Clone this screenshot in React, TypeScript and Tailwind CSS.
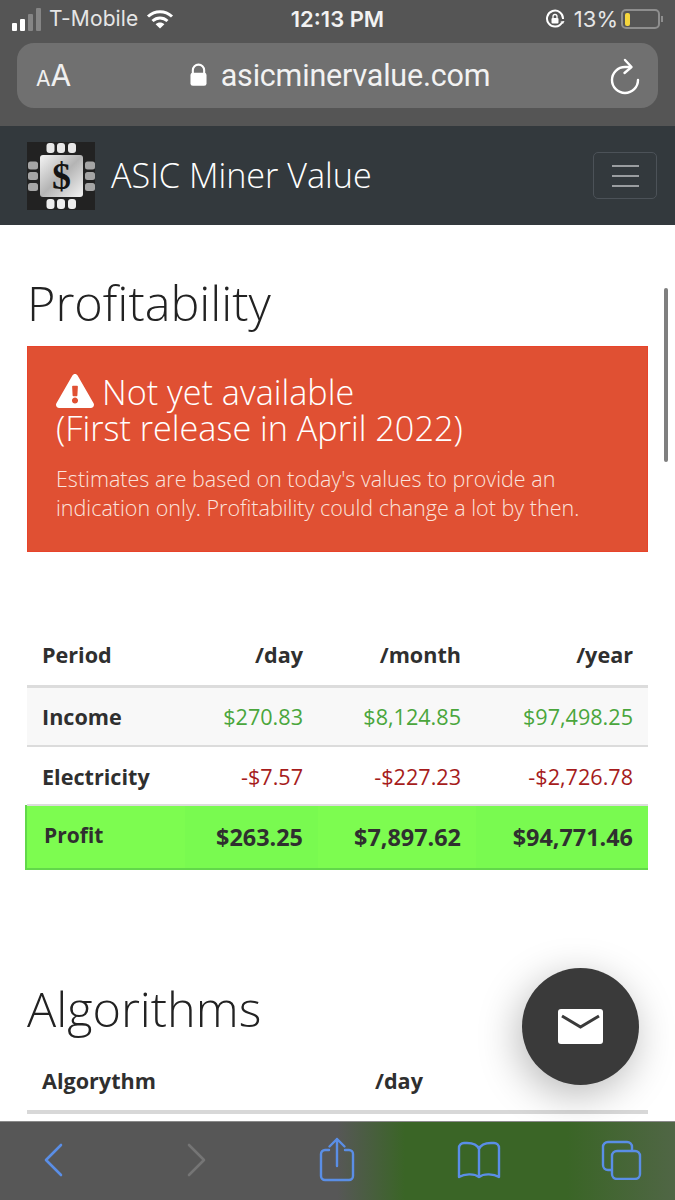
import { FaExclamationTriangle } from 'react-icons/fa';

const rows = [
  { label: 'Income', day: '$270.83', month: '$8,124.85', year: '$97,498.25', color: 'text-[#4aa63c]', bg: 'bg-[#f8f8f8]', height: 'h-[60px]', cell: 'pt-[1px]' },
  { label: 'Electricity', day: '-$7.57', month: '-$227.23', year: '-$2,726.78', color: 'text-[#a61c1c]', bg: 'bg-white', height: 'h-[59px]', cell: 'pt-[3px]' },
];

function StatusBar() {
  return (
    <div className="flex h-[37px] items-center justify-between pl-[12px] pr-[12px] pt-[1px] text-white font-['Inter',sans-serif]">
      <div className="flex w-[190px] items-center">
        <div className="flex items-end gap-[3px]">
          <span className="h-[8px] w-[5px] rounded-[1px] bg-white" />
          <span className="h-[12px] w-[5px] rounded-[1px] bg-white" />
          <span className="h-[17px] w-[5px] rounded-[1px] bg-[#858585]" />
          <span className="h-[23px] w-[5px] rounded-[1px] bg-[#858585]" />
        </div>
        <span className="ml-[8px] text-[21px] font-normal tracking-[0.1px] text-[#e6e6e6]">T-Mobile</span>
        <svg viewBox="0 0 28 20" className="ml-[8px] h-[20px] w-[28px]" fill="none" stroke="white" strokeWidth="3">
          <path d="M2 7.5C9 1 19 1 26 7.5" />
          <path d="M6.5 12C11 8 17 8 21.5 12" />
          <path d="M14 19.5L9.6 15.2C12 13 16 13 18.4 15.2Z" fill="white" stroke="none" />
        </svg>
      </div>
      <span className="text-[22px] font-semibold text-[#f2f2f2]">12:13 PM</span>
      <div className="flex w-[190px] items-center justify-end">
        <svg viewBox="0 0 20 20" className="h-[20px] w-[20px]" fill="none" stroke="white" strokeWidth="2">
          <path d="M17 13.5A8 8 0 1 1 18 10" />
          <path d="M15.5 12.5l2.5 2.5 1.5-3z" fill="white" stroke="none" />
          <rect x="6.5" y="9" width="7" height="5.5" rx="1" fill="white" stroke="none" />
          <path d="M8 9V7.5a2 2 0 0 1 4 0V9" strokeWidth="1.3" />
        </svg>
        <span className="ml-[9px] text-[22px] text-[#e6e6e6]">13%</span>
        <div className="relative ml-[3px] flex h-[20px] w-[39px] items-center rounded-[5px] border-[2px] border-[#8e8e8e] pl-[2px]">
          <span className="h-[13px] w-[5px] rounded-[2px] bg-[#f5d63d]" />
        </div>
        <span className="ml-[1px] h-[6px] w-[2px] bg-[#8e8e8e]" />
      </div>
    </div>
  );
}

function AddressBar() {
  return (
    <div className="mx-[17px] mt-[6px] flex h-[65px] items-center justify-between rounded-[17px] bg-[#707070] pl-[19px] pr-[16px] text-white font-['Inter',sans-serif]">
      <span className="w-[60px] text-[#f0f0f0]">
        <span className="text-[21px]">A</span>
        <span className="text-[30px]">A</span>
      </span>
      <div className="ml-[2px] flex items-center">
        <svg viewBox="0 0 18 24" className="mb-[1px] h-[24px] w-[17px]" fill="white">
          <path d="M3 10V7a6 6 0 0 1 12 0v3" fill="none" stroke="white" strokeWidth="2.2" />
          <rect x="0.5" y="9.5" width="17" height="14" rx="2.5" />
        </svg>
        <span className="ml-[14px] text-[30.5px] tracking-[-0.2px] text-[#f2f2f2] font-['Roboto',sans-serif]">asicminervalue.com</span>
      </div>
      <div className="flex w-[60px] justify-end">
        <svg viewBox="0 0 34 40" className="h-[40px] w-[34px]" fill="none" stroke="white" strokeWidth="2.4" strokeLinecap="round" strokeLinejoin="round">
          <path d="M22 11H17A13 13 0 1 0 30 24" />
          <path d="M17 4l6.5 7L16.5 17" />
        </svg>
      </div>
    </div>
  );
}

function ChipLogo() {
  return (
    <svg viewBox="0 0 68 68" className="h-[68px] w-[68px] shrink-0">
      <rect width="68" height="68" fill="#222" />
      {[19.5, 30, 41].map((x) => (
        <g key={x}>
          <rect x={x} y="1" width="8" height="10" rx="3" fill="#e8e8e8" />
          <rect x={x} y="57" width="8" height="10" rx="3" fill="#eee" />
        </g>
      ))}
      {[19.5, 30, 41].map((y) => (
        <g key={y}>
          <rect x="1" y={y} width="10" height="8" rx="2.5" fill="#a5a5a5" />
          <rect x="58" y={y} width="10" height="8" rx="2.5" fill="#a5a5a5" />
        </g>
      ))}
      <defs>
        <linearGradient id="chip" x1="0" y1="0" x2="1" y2="1">
          <stop offset="0" stopColor="#f4f4f4" />
          <stop offset="0.5" stopColor="#b4b4b4" />
          <stop offset="1" stopColor="#f4f4f4" />
        </linearGradient>
      </defs>
      <rect x="13" y="13" width="43" height="42" rx="3" fill="url(#chip)" />
      <text x="34.5" y="47" textAnchor="middle" fontFamily="Liberation Serif, serif" fontWeight="700" fontSize="38" fill="#151515">$</text>
    </svg>
  );
}

function BottomBar() {
  return (
    <div className="absolute bottom-0 left-0 flex h-[79px] w-full items-center border-t border-[#8a8a8a] bg-[linear-gradient(90deg,#575757_0%,#575757_50%,#3a6526_60%,#3a6526_84%,#506645_100%)] pl-[43px] pb-[2px]">
      <svg viewBox="0 0 20 34" className="h-[34px] w-[20px] shrink-0" fill="none" stroke="#5a8ee6" strokeWidth="2.6" strokeLinecap="round" strokeLinejoin="round">
        <path d="M18 2L3 17l15 15" />
      </svg>
      <svg viewBox="0 0 20 34" className="ml-[124px] h-[34px] w-[20px] shrink-0" fill="none" stroke="#757575" strokeWidth="2.6" strokeLinecap="round" strokeLinejoin="round">
        <path d="M2 2l15 15L2 32" />
      </svg>
      <svg viewBox="0 0 36 45" className="ml-[112px] mb-[2px] h-[45px] w-[36px] shrink-0" fill="none" stroke="#5a8ee6" strokeWidth="2.4" strokeLinecap="round" strokeLinejoin="round">
        <path d="M10 13H6a4 4 0 0 0-4 4v22a4 4 0 0 0 4 4h24a4 4 0 0 0 4-4V17a4 4 0 0 0-4-4h-4" />
        <path d="M18 29V2M10.5 9.5L18 2l7.5 7.5" />
      </svg>
      <svg viewBox="0 0 44 38" className="ml-[102px] h-[38px] w-[44px] shrink-0" fill="none" stroke="#5a8ee6" strokeWidth="2.4" strokeLinecap="round" strokeLinejoin="round">
        <path d="M22 8C20 3 15 2 10 2H7A5 5 0 0 0 2 7v29c5-3 15-4 20 0 5-4 15-3 20 0V7a5 5 0 0 0-5-5h-3c-5 0-10 1-12 6v28" />
      </svg>
      <svg viewBox="0 0 41 40" className="ml-[100px] h-[40px] w-[41px] shrink-0" fill="none" stroke="#5a8ee6" strokeWidth="2.4" strokeLinejoin="round">
        <path d="M10 30H7a5 5 0 0 1-5-5V7a5 5 0 0 1 5-5h19a5 5 0 0 1 5 5v4" />
        <rect x="11" y="11" width="28" height="28" rx="5" />
      </svg>
    </div>
  );
}

export default function App() {
  return (
    <div className="relative h-[1200px] w-[675px] overflow-hidden bg-white font-['Open_Sans',sans-serif]">
      {/* Safari chrome */}
      <div className="h-[126px] bg-[#555555]">
        <StatusBar />
        <AddressBar />
      </div>

      {/* Site nav */}
      <nav className="flex h-[99px] items-center justify-between bg-[#33393d] pl-[27px] pr-[18px]">
        <div className="flex items-center">
          <ChipLogo />
          <span className="mb-[2px] ml-[16px] text-[34.2px] font-light text-white">ASIC Miner Value</span>
        </div>
        <button className="flex h-[47px] w-[64px] flex-col items-center justify-center gap-[8px] rounded-[5px] border border-[#4c5258]">
          <span className="h-[2px] w-[27px] bg-[#9a9da0]" />
          <span className="h-[2px] w-[27px] bg-[#9a9da0]" />
          <span className="h-[2px] w-[27px] bg-[#9a9da0]" />
        </button>
      </nav>

      <main className="px-[27px]">
        <h1 className="mt-[41px] text-[48.6px] leading-[72px] font-light text-[#222]">Profitability</h1>

        <div className="mt-[8px] h-[206px] border border-[#e8432b] bg-[#e05033] px-[28px] pt-[27px] text-white">
          <h4 className="text-[34.2px] leading-[36px] font-light">
            <FaExclamationTriangle className="mr-[8px] inline-block h-[34px] w-[38px] align-[-3px]" />
            Not yet available
            <br />
            (First release in April 2022)
          </h4>
          <p className="mt-[18px] text-[21.5px] leading-[29px] font-light text-[#fbe3dd]">
            Estimates are based on today's values to provide an indication only. Profitability could change a lot by then.
          </p>
        </div>

        <table className="mt-[79px] w-[621px] table-fixed border-collapse text-[21.6px] text-[#2f2f2f]">
          <colgroup>
            <col className="w-[158px]" />
            <col className="w-[133px]" />
            <col className="w-[158px]" />
            <col className="w-[172px]" />
          </colgroup>
          <thead>
            <tr className="h-[55px] border-b-[3px] border-[#dcdcdc]">
              <th className="px-[15px] pb-[5px] text-left font-bold">Period</th>
              <th className="px-[15px] pb-[5px] text-right font-bold">/day</th>
              <th className="px-[15px] pb-[5px] text-right font-bold">/month</th>
              <th className="px-[15px] pb-[5px] text-right font-bold">/year</th>
            </tr>
          </thead>
          <tbody>
            {rows.map((row) => (
              <tr key={row.label} className={`${row.height} border-b-[2px] border-[#dcdcdc] ${row.bg}`}>
                <td className={`px-[15px] font-bold ${row.cell}`}>{row.label}</td>
                <td className={`px-[15px] text-right ${row.color} ${row.cell}`}>{row.day}</td>
                <td className={`px-[15px] text-right ${row.color} ${row.cell}`}>{row.month}</td>
                <td className={`px-[15px] text-right ${row.color} ${row.cell}`}>{row.year}</td>
              </tr>
            ))}
            <tr className="h-[64px] border-b-[2px] border-[#62d84a] font-bold">
              <td className="relative bg-[#7dfc50] pb-[2px] pl-[17px] text-[21px]">
                <span className="absolute -left-[2px] -top-[1px] -bottom-[2px] w-[2px] bg-[#62d84a]" />
                Profit
              </td>
              <td className="bg-[#79fa50] px-[15px] pt-[2px] text-right text-[23.4px]">$263.25</td>
              <td className="bg-[#7dfc50] px-[15px] pt-[2px] text-right text-[23.4px]">$7,897.62</td>
              <td className="bg-[#79fa50] px-[15px] pt-[2px] text-right text-[23.4px]">$94,771.46</td>
            </tr>
          </tbody>
        </table>

        <h1 className="mt-[102px] text-[48.6px] leading-[72px] font-light text-[#222]">Algorithms</h1>

        <table className="mt-[9px] w-[621px] table-fixed border-collapse text-[21.6px] text-[#2f2f2f]">
          <thead>
            <tr className="h-[59px] border-b-[4px] border-[#d8d8d8]">
              <th className="w-[348px] px-[15px] text-left font-bold">Algorythm</th>
              <th className="px-[0px] text-left font-bold">/day</th>
            </tr>
          </thead>
        </table>
      </main>

      {/* Page scrollbar */}
      <div className="absolute left-[664px] top-[288px] h-[174px] w-[4px] rounded-full bg-[#7f7f7f]" />

      {/* Floating contact button */}
      <button className="absolute left-[522px] top-[968px] flex h-[117px] w-[117px] items-center justify-center rounded-full bg-[#3a3a3a] shadow-[-4px_10px_40px_rgba(0,0,0,0.28)]">
        <svg viewBox="0 0 45 35" className="h-[35px] w-[45px]">
          <rect width="45" height="35" rx="3" fill="white" />
          <path d="M4 7l18.5 11L41 7" fill="none" stroke="#3a3a3a" strokeWidth="3" />
        </svg>
      </button>

      <BottomBar />
    </div>
  );
}
